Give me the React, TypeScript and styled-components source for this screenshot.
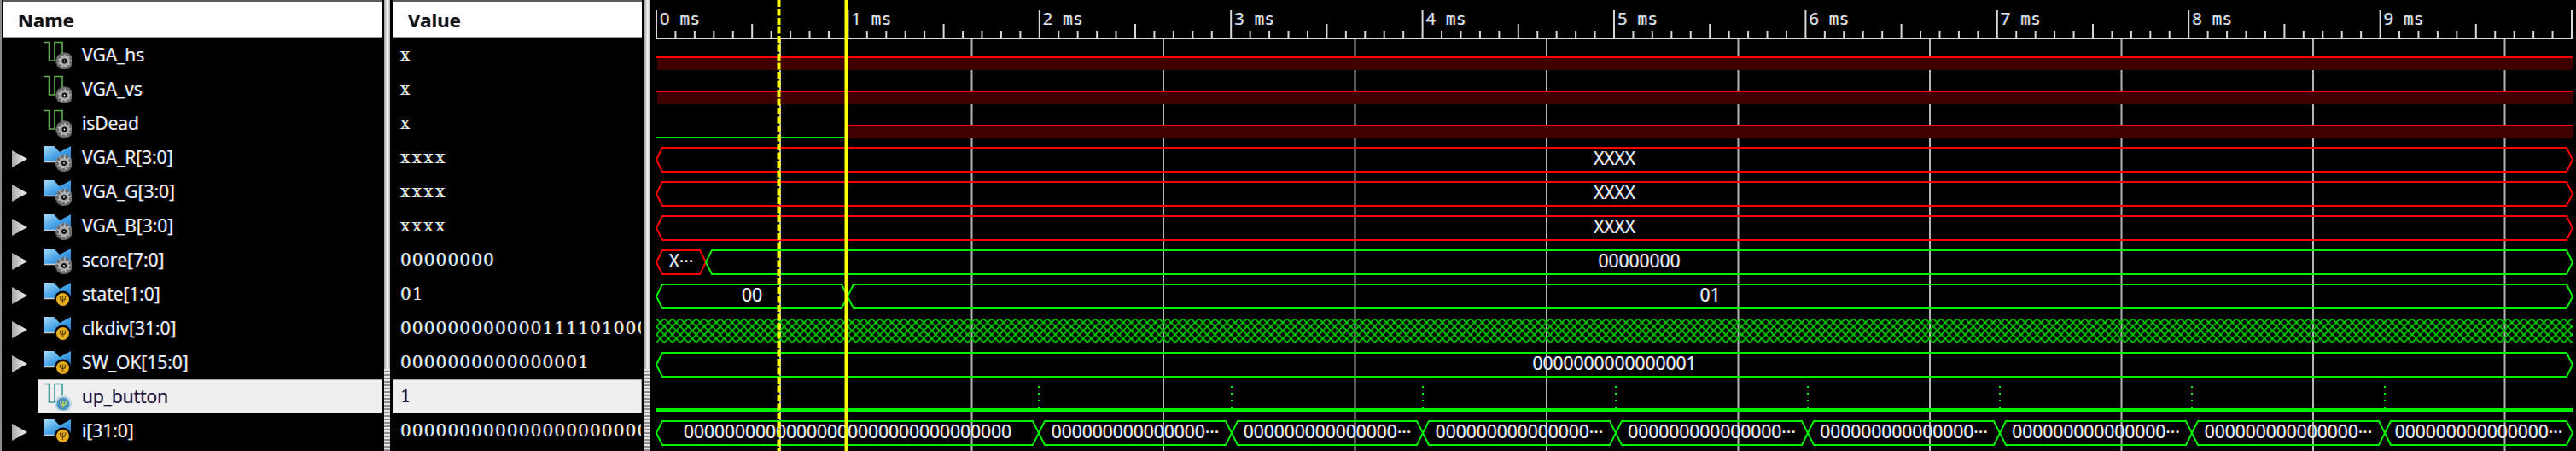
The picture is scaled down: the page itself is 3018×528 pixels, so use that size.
import styled, { createGlobalStyle } from 'styled-components';

const GlobalStyle = createGlobalStyle`
	html, body {
		margin: 0;
		background: #000;
		overflow: hidden;
	}
`;

const fringe = '-0.7px 0 0 rgba(40, 130, 255, 0.55), 0.7px 0 0 rgba(255, 150, 30, 0.55)';

const Page = styled.div`
	display: flex;
	width: 3018px;
	height: 528px;
	background: #000;
	overflow: hidden;
`;
// колонка с именами
const NamePanel = styled.div`
	box-sizing: border-box;
	width: 450px;
	flex-shrink: 0;
	border-left: 2px solid #8c8c8c;
	padding: 0 2px;
`;
const ValuePanel = styled.div`
	box-sizing: border-box;
	width: 298px;
	flex-shrink: 0;
	padding: 0 3px;
`;
const Splitter = styled.div`
	width: 7px;
	flex-shrink: 0;
	background:
		repeating-linear-gradient(0deg, #8f8f8f 0 2px, #e4e4e4 2px 4px) bottom / 100% 96px no-repeat,
		linear-gradient(90deg, #9a9a9a, #f2f2f2 50%, #b4b4b4);
`;
const Header = styled.div<{ $indent: number }>`
	box-sizing: border-box;
	height: 44px;
	display: flex;
	align-items: center;
	padding-left: ${(p) => p.$indent}px;
	background: #fff;
	border-top: 2px solid #5a5a5a;
	border-bottom: 1px solid #9a9a9a;
	font: 700 22px 'Open Sans', sans-serif;
	color: #111;
	text-shadow: ${fringe};
`;
const NameRow = styled.div`
	height: 40px;
	display: flex;
	align-items: center;
	color: #eef4ff;
`;
const Expander = styled.div`
	width: 40px;
	height: 100%;
	flex-shrink: 0;
	display: flex;
	align-items: center;
	padding-left: 10px;
	box-sizing: border-box;
`;
const Triangle = styled.div`
	width: 18px;
	height: 20px;
	margin-top: 4px;
	background: linear-gradient(90deg, #a8a8a8, #f4f4f4);
	clip-path: polygon(0 0, 100% 50%, 0 100%);
`;
const NameCell = styled.div<{ $selected?: boolean }>`
	box-sizing: border-box;
	flex: 1;
	height: 100%;
	display: flex;
	align-items: center;
	gap: 12px;
	padding-left: 5px;
	font: 400 21px 'Open Sans', sans-serif;
	text-shadow: ${fringe};
	background: ${(p) => (p.$selected ? '#efefef' : 'transparent')};
	border: 1px solid ${(p) => (p.$selected ? '#a8a8a8' : 'transparent')};
	color: ${(p) => (p.$selected ? '#1a1040' : 'inherit')};
`;
const ValueRow = styled.div<{ $selected?: boolean; $spacing?: number }>`
	box-sizing: border-box;
	height: 40px;
	display: flex;
	align-items: center;
	padding-left: 8px;
	overflow: hidden;
	white-space: nowrap;
	font: 400 20px 'DejaVu Serif', serif;
	letter-spacing: ${(p) => p.$spacing ?? 1.15}px;
	text-shadow: ${fringe};
	background: ${(p) => (p.$selected ? '#efefef' : 'transparent')};
	border: 1px solid ${(p) => (p.$selected ? '#a8a8a8' : 'transparent')};
	color: ${(p) => (p.$selected ? '#1a1040' : '#e8f0f0')};
`;
const Wave = styled.svg`
	flex: 1;
	display: block;
	height: 528px;
`;
const BusText = styled.text`
	font: 400 21px 'Open Sans', sans-serif;
	fill: #eef4ff;
	text-anchor: middle;
	dominant-baseline: central;
	text-shadow: ${fringe};
`;
const TickText = styled.text`
	font: 400 20px 'Open Sans', sans-serif;
	fill: #dfe6ee;
	text-shadow: ${fringe};
`;
const MsText = styled.tspan`
	font: 400 19px 'DejaVu Sans Mono', monospace;
	letter-spacing: 0.5px;
`;

type Badge = 'gear' | 'probe';

const BadgeMark = ({ kind, blue, cx, cy }: { kind: Badge; blue?: boolean; cx: number; cy: number }) => {
	if (kind === 'gear') {
		return (
			<g>
				<circle cx={cx} cy={cy} r="11" fill="url(#halo)" />
				<circle cx={cx} cy={cy} r="8" fill="none" stroke="#6e6e6e" strokeWidth="4" strokeDasharray="4 1.6" />
				<circle cx={cx} cy={cy} r="5.5" fill="#a8a8a8" />
				<circle cx={cx} cy={cy} r="3" fill="#111" />
				<circle cx={cx} cy={cy} r="0.9" fill="#eee" />
			</g>
		);
	}
	return (
		<g>
			<circle cx={cx} cy={cy} r="10" fill={blue ? '#9cc6dc' : '#000'} opacity={blue ? 0.6 : 1} />
			<circle cx={cx} cy={cy} r="7.5" fill={blue ? '#4a93bd' : '#e6ae1e'} />
			<path
				d={`M${cx - 3} ${cy - 4}v2.5q0 2.5 3 2.5t3-2.5v-2.5M${cx} ${cy - 4}v8.5`}
				fill="none"
				stroke={blue ? '#c8d860' : '#6a4a00'}
				strokeWidth="1.3"
			/>
		</g>
	);
};

const ScalarIcon = ({ badge, selected }: { badge: Badge; selected?: boolean }) => (
	<svg width="34" height="34" viewBox="0 0 34 34" style={{ flexShrink: 0 }}>
		<path
			d="M1 2.5H7.5V24H14V2.5H23V16"
			fill="none"
			stroke={selected ? '#3c9a9c' : '#5fae4f'}
			strokeWidth="1.6"
		/>
		<BadgeMark kind={badge} blue={selected} cx={selected ? 24 : 25.5} cy={selected ? 26 : 24.5} />
	</svg>
);

const BusIcon = ({ badge }: { badge: Badge }) => (
	<svg width="34" height="34" viewBox="0 0 34 34" style={{ flexShrink: 0 }}>
		<path d="M1 4H13L20 11L33 4V23L22 22H1Z" fill="url(#busBlue)" />
		<path d="M1 22.5H16" stroke="#fff" strokeWidth="1.5" opacity="0.8" />
		<BadgeMark kind={badge} cx={badge === 'gear' ? 25 : 23.5} cy={badge === 'gear' ? 24 : 23.5} />
	</svg>
);

type Signal = {
	name: string;
	value: string;
	bus?: boolean;
	badge: Badge;
	spacing?: number;
	selected?: boolean;
};

// значения обрезаны шириной колонки, как в окне симулятора
const signals: Signal[] = [
	{ name: 'VGA_hs', value: 'x', badge: 'gear' },
	{ name: 'VGA_vs', value: 'x', badge: 'gear' },
	{ name: 'isDead', value: 'x', badge: 'gear' },
	{ name: 'VGA_R[3:0]', value: 'xxxx', bus: true, badge: 'gear', spacing: 2.4 },
	{ name: 'VGA_G[3:0]', value: 'xxxx', bus: true, badge: 'gear', spacing: 2.4 },
	{ name: 'VGA_B[3:0]', value: 'xxxx', bus: true, badge: 'gear', spacing: 2.4 },
	{ name: 'score[7:0]', value: '00000000', bus: true, badge: 'gear' },
	{ name: 'state[1:0]', value: '01', bus: true, badge: 'probe' },
	{ name: 'clkdiv[31:0]', value: '000000000000111101000', bus: true, badge: 'probe' },
	{ name: 'SW_OK[15:0]', value: '0000000000000001', bus: true, badge: 'probe' },
	{ name: 'up_button', value: '1', badge: 'probe', selected: true },
	{ name: 'i[31:0]', value: '000000000000000000000', bus: true, badge: 'probe' },
];

const RED = '#ff0000';
const GREEN = '#00f000';
const X0 = 769;
const X1 = 3014;
const MS = 224.4;

const range = (n: number) => Array.from({ length: n }, (_, i) => i);

const busPath = (a: number, b: number, top: number) => {
	const mid = top + 14;
	const bot = top + 28;
	return `M${a} ${mid}L${a + 7} ${top}H${b - 7}L${b} ${mid}L${b - 7} ${bot}H${a + 7}Z`;
};

type Seg = { a: number; b: number; top: number; color: string; label: string };

const iEdges = [X0, 1217, 1443, 1667, 1893, 2118, 2343, 2568, 2794, X1];
const zeros = '000000000000000';

const segs: Seg[] = [
	{ a: X0, b: X1, top: 173, color: RED, label: 'XXXX' },
	{ a: X0, b: X1, top: 213, color: RED, label: 'XXXX' },
	{ a: X0, b: X1, top: 253, color: RED, label: 'XXXX' },
	{ a: X0, b: 827, top: 293, color: RED, label: 'X···' },
	{ a: 827, b: X1, top: 293, color: GREEN, label: '00000000' },
	{ a: X0, b: 993, top: 333, color: GREEN, label: '00' },
	{ a: 993, b: X1, top: 333, color: GREEN, label: '01' },
	{ a: X0, b: X1, top: 413, color: GREEN, label: '0000000000000001' },
	...iEdges.slice(0, -1).map((a, i) => ({
		a,
		b: iEdges[i + 1],
		top: 493,
		color: GREEN,
		label: i === 0 ? '00000000000000000000000000000000' : `${zeros}···`,
	})),
];

const WavePanel = () => (
	<Wave viewBox="762 0 2256 528" width="2256" height="528">
		<defs>
			<pattern id="hatch" width="9.35" height="9.35" patternUnits="userSpaceOnUse" x={X0} y="373">
				<path d="M0 0L9.35 9.35M9.35 0L0 9.35" stroke="#00d000" strokeWidth="1.7" />
			</pattern>
		</defs>

		{/* линейка времени */}
		<path d={`M768 45H3015`} stroke="#d8d8d8" strokeWidth="2" />
		{range(101).map((i) => {
			const x = X0 + (i * MS) / 10;
			const top = i % 10 === 0 ? 12 : i % 5 === 0 ? 28 : 36;
			return <path key={i} d={`M${x} ${top}V44`} stroke="#d8d8d8" strokeWidth="2" />;
		})}
		{range(10).map((i) => (
			<TickText key={i} x={X0 + i * MS + 4} y="29">
				{i}
				<MsText dx="12">ms</MsText>
			</TickText>
		))}

		{/* сетка */}
		{range(10).map((i) => (
			<path key={i} d={`M${914 + i * 224.5} 46V528`} stroke="#b4b4b4" strokeWidth="2" />
		))}

		{/* однобитные сигналы */}
		<rect x="770" y="68" width={X1 - 770} height="14" fill="#400000" />
		<rect x="770" y="108" width={X1 - 770} height="14" fill="#400000" />
		<rect x="992" y="148" width={X1 - 992} height="14" fill="#400000" />
		<path d={`M768 67H${X1}M768 107H${X1}M992 147H${X1}`} stroke={RED} strokeWidth="2" />
		<path d="M768 161H992" stroke={GREEN} strokeWidth="2" />

		{/* шины */}
		{segs.map((s) => (
			<path
				key={`${s.top}-${s.a}`}
				d={busPath(s.a, s.b, s.top)}
				fill="none"
				stroke={s.color}
				strokeWidth="2"
			/>
		))}
		{segs.map((s) => (
			<BusText key={`t${s.top}-${s.a}`} x={(s.a + s.b) / 2} y={s.top + 12}>
				{s.label}
			</BusText>
		))}

		<rect x={X0} y="373" width={X1 - X0} height="28" fill="url(#hatch)" />

		{/* up_button */}
		<rect x="768" y="478" width={X1 - 768} height="4" fill={GREEN} />
		{iEdges.slice(1, -1).map((x) => (
			<path key={x} d={`M${x} 452V478`} stroke={GREEN} strokeWidth="2" strokeDasharray="2 6" />
		))}

		{/* курсоры */}
		<path d="M912.5 0V528" stroke="#ffff00" strokeWidth="4" strokeDasharray="8 2.5" />
		<path d="M991.5 0V528" stroke="#ffff00" strokeWidth="4" />
	</Wave>
);

const Gradients = () => (
	<svg width="0" height="0" style={{ position: 'absolute' }}>
		<defs>
			<linearGradient id="busBlue" x1="0" y1="0" x2="1" y2="1">
				<stop offset="0" stopColor="#a8dcf8" />
				<stop offset="0.55" stopColor="#3f9ee6" />
				<stop offset="1" stopColor="#1c6cc0" />
			</linearGradient>
			<radialGradient id="halo">
				<stop offset="0.6" stopColor="#cfcfcf" />
				<stop offset="1" stopColor="#cfcfcf" stopOpacity="0" />
			</radialGradient>
		</defs>
	</svg>
);

export default function App() {
	return (
		<Page>
			<GlobalStyle />
			<Gradients />
			<NamePanel>
				<Header $indent={17}>Name</Header>
				{signals.map((s) => (
					<NameRow key={s.name}>
						<Expander>{s.bus && <Triangle />}</Expander>
						<NameCell $selected={s.selected}>
							{s.bus ? <BusIcon badge={s.badge} /> : <ScalarIcon badge={s.badge} selected={s.selected} />}
							{s.name}
						</NameCell>
					</NameRow>
				))}
			</NamePanel>
			<Splitter />
			<ValuePanel>
				<Header $indent={18}>Value</Header>
				{signals.map((s) => (
					<ValueRow key={s.name} $selected={s.selected} $spacing={s.spacing}>
						{s.value}
					</ValueRow>
				))}
			</ValuePanel>
			<Splitter />
			<WavePanel />
		</Page>
	);
}
